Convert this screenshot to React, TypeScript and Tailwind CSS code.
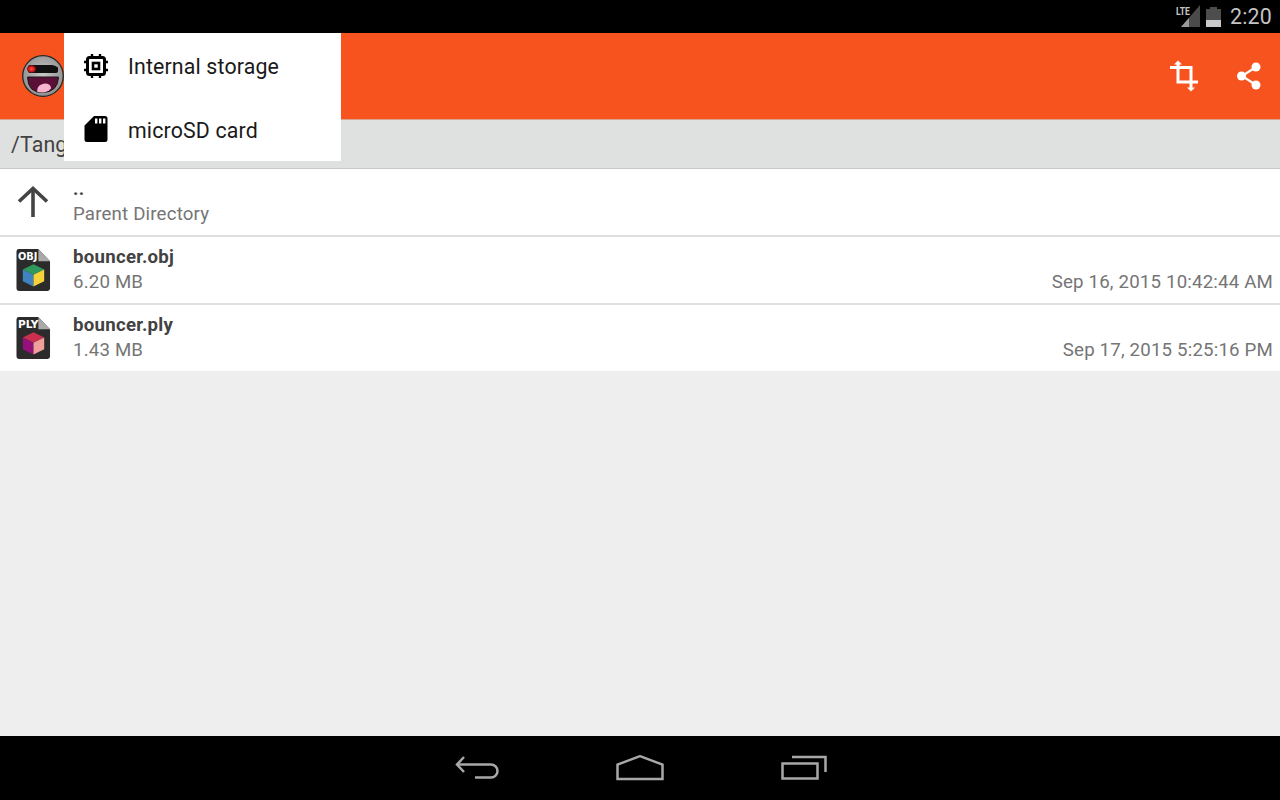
const FONT = "font-['Roboto',sans-serif]";

function ChipIcon() {
  return (
    <svg width="26" height="26" viewBox="0 0 26 26" fill="none" stroke="#000">
      <rect x="4.500" y="4.500" width="17" height="17" rx="2" strokeWidth="3" />
      <rect x="10" y="10" width="6" height="6" strokeWidth="2.600" />
      <path d="M9 1v3M17 1v3M9 22v3M17 22v3M1 9h3M1 17h3M22 9h3M22 17h3" strokeWidth="2.400" />
    </svg>
  );
}

function SdIcon() {
  return (
    <svg width="26" height="28" viewBox="0 0 26 28">
      <path
        d="M11 1H22a2.500 2.500 0 0 1 2.500 2.500V24.500A2.500 2.500 0 0 1 22 27H4A2.500 2.500 0 0 1 1.500 24.500V10.500Z"
        fill="#000"
      />
      <path d="M12 3.500h2.400v5H12zM16 3.500h2.400v5H16zM20 3.500h2.400v5H20z" fill="#fff" />
    </svg>
  );
}

function AppLogo() {
  return (
    <svg width="42" height="42" viewBox="0 0 42 42">
      <defs>
        <radialGradient id="face" cx="50%" cy="45%" r="60%">
          <stop offset="0%" stopColor="#c8c8c8" />
          <stop offset="100%" stopColor="#8a8a8a" />
        </radialGradient>
        <radialGradient id="eye" cx="50%" cy="50%" r="50%">
          <stop offset="0%" stopColor="#ff5a4a" />
          <stop offset="60%" stopColor="#d81818" />
          <stop offset="100%" stopColor="#7a1010" />
        </radialGradient>
      </defs>
      <circle cx="21" cy="21" r="20.300" fill="url(#face)" stroke="#1c2a2a" strokeWidth="1.300" />
      <path d="M6 12q0-2 2-2h22q3 0 6 2.500V16q0 2-2 2H8q-2 0-2-2Z" fill="#111" />
      <ellipse cx="9.500" cy="14" rx="4.500" ry="3.800" fill="url(#eye)" />
      <path d="M5.500 22h31q-.5 15-15.500 15.500T5.500 22Z" fill="#5a1036" stroke="#1a1a1a" strokeWidth="1" />
      <path d="M15 36.500q0-7 7.500-8 6.500 0 6.500 5-3.500 3.700-8 4-3.500 0-6-1Z" fill="#f6b4d0" />
    </svg>
  );
}

function CropIcon() {
  return (
    <svg width="28" height="32" viewBox="0 0 28 32" fill="none" stroke="#fff" strokeWidth="3">
      <path d="M0 7.500h21V28" />
      <path d="M8 3v19h20" />
      <path d="M4 4.500 8 .5l4 4Z" fill="#fff" stroke="none" />
      <path d="M17 27.500 21 31.500l4-4Z" fill="#fff" stroke="none" />
    </svg>
  );
}

function ShareIcon() {
  return (
    <svg width="26" height="28" viewBox="0 0 26 28">
      <path d="M20 5 6 14l14 9" fill="none" stroke="#fff" strokeWidth="2.200" />
      <circle cx="20" cy="5" r="4.500" fill="#fff" />
      <circle cx="5.500" cy="14" r="4.500" fill="#fff" />
      <circle cx="20" cy="23" r="4.500" fill="#fff" />
    </svg>
  );
}

function UpArrow() {
  return (
    <svg width="32" height="32" viewBox="0 0 32 32" fill="none" stroke="#444" strokeWidth="3.600">
      <path d="M17 31V3" />
      <path d="M3 15.500 17 2.500 31 15.500" />
    </svg>
  );
}

function FileIcon({ label, top, left, right }: { label: string; top: string; left: string; right: string }) {
  return (
    <svg width="35" height="44" viewBox="0 0 36 44">
      <path d="M3 .5H23L35 13V41a2.500 2.500 0 0 1-2.500 2.500H3A2.500 2.500 0 0 1 .5 41V3A2.500 2.500 0 0 1 3 .5Z" fill="#2b2b2b" />
      <path d="M23 .5 35 13H23Z" fill="#a9a9a9" />
      <text
        x="2"
        y="11.500"
        fontSize="11.500"
        fontWeight="700"
        fill="#fff"
        fontFamily="'DejaVu Sans', sans-serif"
        textLength={label === 'OBJ' ? 20 : 21}
        lengthAdjust="spacingAndGlyphs"
      >
        {label}
      </text>
      <path d="M18 16 29 21.500 18 27 7 21.500Z" fill={top} />
      <path d="M7 21.500 18 27V39L7 33.500Z" fill={left} />
      <path d="M29 21.500 18 27V39L29 33.500Z" fill={right} />
    </svg>
  );
}

function BackIcon() {
  return (
    <svg width="44" height="26" viewBox="0 0 44 26" fill="none" stroke="#a8a8a8" strokeWidth="2.500">
      <path d="M9 2 2 9.500 9 17" />
      <path d="M2.500 9.500H36a6 6 0 0 1 0 13H20" />
    </svg>
  );
}

function HomeIcon() {
  return (
    <svg width="48" height="26" viewBox="0 0 48 26" fill="none" stroke="#a8a8a8" strokeWidth="2.500">
      <path d="M1.500 24V9.500L24 1.200l22.500 8.300V24Z" />
    </svg>
  );
}

function RecentIcon() {
  return (
    <svg width="46" height="26" viewBox="0 0 46 26" fill="none" stroke="#a8a8a8" strokeWidth="2.500">
      <rect x="1.500" y="8.500" width="35" height="15" />
      <path d="M11 2h33.500v15" />
    </svg>
  );
}

function StatusIcons() {
  return (
    <svg width="46" height="33" viewBox="0 0 46 33">
      <path d="M5 27 24 5V27Z" fill="#4a4a4a" />
      <path d="M5 27 13 18V27Z" fill="#9a9a9a" />
      <rect x="0" y="6" width="15" height="10" fill="#000" />
      <text x="0" y="15" fontSize="11.500" fontWeight="700" fill="#c4c4c4" fontFamily="'Roboto', sans-serif" textLength="14" lengthAdjust="spacingAndGlyphs">
        LTE
      </text>
      <rect x="30" y="9" width="15" height="18" fill="#4d4d4d" />
      <rect x="34" y="7" width="7" height="2" fill="#4d4d4d" />
      <rect x="30" y="20" width="15" height="7" fill="#c9c9c9" />
    </svg>
  );
}

type Row = {
  icon: React.ReactNode;
  title: string;
  sub: string;
  date?: string;
};

const rows: Row[] = [
  { icon: <UpArrow />, title: '..', sub: 'Parent Directory' },
  {
    icon: <FileIcon label="OBJ" top="#2f9a5c" left="#3f83c0" right="#f5d23a" />,
    title: 'bouncer.obj',
    sub: '6.20 MB',
    date: 'Sep 16, 2015 10:42:44 AM',
  },
  {
    icon: <FileIcon label="PLY" top="#c9304f" left="#96107c" right="#f0a09a" />,
    title: 'bouncer.ply',
    sub: '1.43 MB',
    date: 'Sep 17, 2015 5:25:16 PM',
  },
];

function FileRow({ row }: { row: Row }) {
  return (
    <div className="h-[66px] bg-white flex items-center">
      <div className="w-[73px] shrink-0 pl-[16px] flex items-center">{row.icon}</div>
      <div className="flex-1 min-w-0 flex flex-col">
        <div className="h-[25px] leading-[25px] text-[18.670px] font-bold text-[#424242] tracking-[0.25px]">
          {row.title}
        </div>
        <div className="h-[25px] leading-[25px] text-[18.670px] text-[#757575] tracking-[0.18px] flex justify-between pr-[7px]">
          <span>{row.sub}</span>
          {row.date && <span>{row.date}</span>}
        </div>
      </div>
    </div>
  );
}

export default function App() {
  return (
    <div className={`relative w-[1280px] h-[800px] overflow-hidden flex flex-col bg-[#eeeeee] ${FONT}`}>
      <div className="h-[33px] bg-black flex items-center justify-end pr-[8px] gap-[8px] shrink-0">
        <StatusIcons />
        <span className="text-[21.330px] text-[#c4c4c4] leading-none tracking-[0.2px]">2:20</span>
      </div>

      <div className="h-[87px] bg-[#f7531f] flex items-center pl-[22px] pr-[18px] shrink-0 border-b border-[#d9a48e]">
        <AppLogo />
        <div className="ml-auto flex items-center gap-[38px]">
          <CropIcon />
          <ShareIcon />
        </div>
      </div>

      <div className="h-[49px] bg-[#dfe0e0] flex items-center pl-[11px] pt-[2px] text-[21.330px] text-[#424242] tracking-[0.15px] shrink-0 border-b border-[#c8c8c8]">
        /Tango
      </div>

      <div className="flex flex-col gap-[2px] bg-[#e0e0e0] shrink-0">
        {rows.map((row) => (
          <FileRow key={row.title} row={row} />
        ))}
      </div>

      <div className="flex-1" />

      <div className="h-[64px] bg-black flex items-center justify-center gap-[117px] shrink-0 pl-[2px]">
        <BackIcon />
        <HomeIcon />
        <RecentIcon />
      </div>

      {/* dropdown sits over the action bar */}
      <div className="absolute left-[64px] top-[33px] w-[277px] bg-white text-[21.330px] text-[#1a1a1a] tracking-[0.15px]">
        <div className="h-[64px] flex items-center">
          <div className="w-[64px] pl-[19px] pt-[2px] flex items-center">
            <ChipIcon />
          </div>
          <span className="pt-[4px]">Internal storage</span>
        </div>
        <div className="h-[64px] flex items-center">
          <div className="w-[64px] pl-[19px] flex items-center">
            <SdIcon />
          </div>
          <span className="pt-[4px]">microSD card</span>
        </div>
      </div>
    </div>
  );
}
